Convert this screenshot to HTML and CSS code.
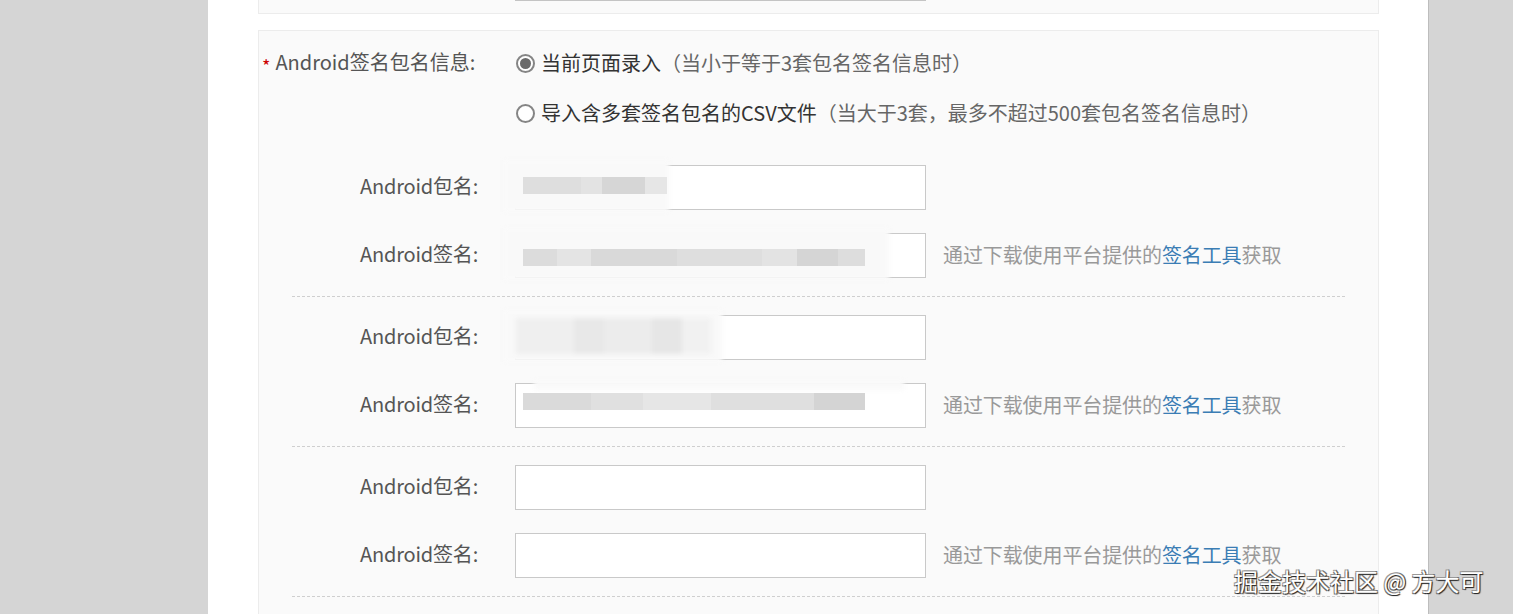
FILE: index.html
```html
<!DOCTYPE html>
<html lang="zh-CN">
<head>
<meta charset="utf-8">
<title>Android签名包名信息</title>
<link rel="stylesheet" href="styles.css">
</head>
<body>
<div class="page">
  <div class="panel-top"><div class="stub"></div></div>
  <div class="panel">
    <div class="field-row">
      <div class="field-label"><span class="req">*</span>Android签名包名信息:</div>
      <div class="options">
        <label class="radio-row"><span class="radio checked"></span><span class="opt-main">当前页面录入</span><span class="opt-note">（当小于等于3套包名签名信息时）</span></label>
        <label class="radio-row"><span class="radio"></span><span class="opt-main">导入含多套签名包名的CSV文件</span><span class="opt-note">（当大于3套，最多不超过500套包名签名信息时）</span></label>
      </div>
    </div>

    <div class="group">
      <div class="pair-row">
        <div class="pair-label">Android包名:</div>
        <div class="input-box">
          <div class="mask mask-a"></div>
          <div class="blur-bar bar-a"></div>
        </div>
      </div>
      <div class="pair-row">
        <div class="pair-label">Android签名:</div>
        <div class="input-box">
          <div class="mask mask-b"></div>
          <div class="blur-bar bar-b"></div>
        </div>
        <div class="hint">通过下载使用平台提供的<a class="link">签名工具</a>获取</div>
      </div>
    </div>

    <div class="group">
      <div class="pair-row">
        <div class="pair-label">Android包名:</div>
        <div class="input-box">
          <div class="mask mask-c"></div>
          <div class="blur-bar bar-c"></div>
        </div>
      </div>
      <div class="pair-row">
        <div class="pair-label">Android签名:</div>
        <div class="input-box">
          <div class="mask mask-d"></div>
          <div class="blur-bar bar-d"></div>
        </div>
        <div class="hint">通过下载使用平台提供的<a class="link">签名工具</a>获取</div>
      </div>
    </div>

    <div class="group">
      <div class="pair-row">
        <div class="pair-label">Android包名:</div>
        <div class="input-box"></div>
      </div>
      <div class="pair-row">
        <div class="pair-label">Android签名:</div>
        <div class="input-box"></div>
        <div class="hint">通过下载使用平台提供的<a class="link">签名工具</a>获取</div>
      </div>
    </div>
  </div>
</div>
<div class="watermark">掘金技术社区 @ 方大可</div>
</body>
</html>
```
FILE: styles.css
```css
html, body {
  margin: 0;
  padding: 0;
}
body {
  width: 1513px;
  height: 614px;
  overflow: hidden;
  background: #d5d5d5;
  font-family: "Noto Sans CJK SC", "Noto Sans", sans-serif;
  font-size: 20px;
  color: #555;
  position: relative;
}
.page {
  margin-left: 208px;
  width: 1221px;
  height: 614px;
  overflow: hidden;
  background: #fff;
  box-sizing: border-box;
  padding: 0 49px 0 50px;
  border-right: 1px solid #bdbdbd;
}
.panel-top {
  height: 13px;
  border: 1px solid #ececec;
  border-top: none;
  background: #fafafa;
}
.stub {
  margin-left: 256px;
  width: 411px;
  height: 1px;
  background: #c4c4c4;
}
.panel {
  margin-top: 16px;
  border: 1px solid #ececec;
  border-bottom: none;
  background: #fafafa;
  height: 584px;
  box-sizing: border-box;
  padding-top: 17px;
}
.field-row {
  display: flex;
}
.field-label {
  width: 257px;
  box-sizing: border-box;
  padding-left: 3px;
  height: 30px;
  line-height: 28px;
  color: #555;
  white-space: nowrap;
}
.req {
  color: #c00;
  font-size: 18px;
  margin-right: 5px;
  position: relative;
  top: 3px;
}
.options {
  display: flex;
  flex-direction: column;
  gap: 20px;
}
.radio-row {
  display: flex;
  align-items: center;
  height: 30px;
  line-height: 28px;
  white-space: nowrap;
}
.radio {
  width: 15px;
  height: 15px;
  border: 2px solid #858585;
  border-radius: 50%;
  background: #fff;
  margin-right: 6px;
  position: relative;
  flex: none;
}
.radio.checked::after {
  content: "";
  position: absolute;
  left: 2px;
  top: 2px;
  width: 11px;
  height: 11px;
  border-radius: 50%;
  background: #6a6a6a;
}
.opt-main {
  color: #333;
}
.opt-note {
  color: #666;
}
.group {
  margin: 19px 33px 0;
  padding: 18px 0 18px;
  border-bottom: 1px dashed #cfcfcf;
  display: flex;
  flex-direction: column;
  gap: 23px;
}
.group + .group {
  margin-top: 0;
}
.pair-row {
  display: flex;
  align-items: center;
  height: 45px;
}
.pair-label {
  width: 186px;
  text-align: right;
  margin-right: 37px;
  padding-bottom: 4px;
  color: #555;
  white-space: nowrap;
  letter-spacing: -0.2px;
}
.input-box {
  width: 411px;
  height: 45px;
  box-sizing: border-box;
  border: 1px solid #c9c9c9;
  background: #fff;
  position: relative;
  flex: none;
}
.hint {
  margin-left: 17px;
  padding-bottom: 2px;
  color: #999;
  white-space: nowrap;
  letter-spacing: -0.1px;
}
.link {
  color: #3b7db4;
  text-decoration: none;
}
.mask {
  position: absolute;
  background: #f9f9f9;
  filter: blur(2px);
}
.mask-a {
  left: -12px;
  top: -6px;
  width: 165px;
  height: 52px;
}
.mask-b {
  left: -12px;
  top: -6px;
  width: 385px;
  height: 52px;
}
.mask-c {
  left: -12px;
  top: -6px;
  width: 218px;
  height: 52px;
}
.mask-d {
  left: 18px;
  top: -4px;
  width: 370px;
  height: 10px;
}
.blur-bar {
  position: absolute;
  height: 17px;
  filter: blur(0.6px);
}
.bar-a {
  left: 7px;
  top: 11px;
  width: 144px;
  background: linear-gradient(90deg, #dedede 0 40%, #e3e3e3 40% 55%, #d6d6d6 55% 85%, #e6e6e6 85%);
}
.bar-b {
  left: 7px;
  top: 15px;
  width: 342px;
  background: linear-gradient(90deg, #dcdcdc 0 10%, #e4e4e4 10% 20%, #d9d9d9 20% 45%, #dedede 45% 70%, #e3e3e3 70% 80%, #d5d5d5 80% 92%, #dddddd 92%);
}
.bar-c {
  left: 0;
  top: 2px;
  width: 195px;
  height: 36px;
  filter: blur(2px);
  background: linear-gradient(90deg, #efefef 0 30%, #e8e8e8 30% 45%, #ececec 45% 70%, #e6e6e6 70% 85%, #f1f1f1 85%);
}
.bar-d {
  left: 7px;
  top: 9px;
  width: 342px;
  background: linear-gradient(90deg, #dadada 0 20%, #e0e0e0 20% 35%, #e6e6e6 35% 55%, #dfdfdf 55% 85%, #d4d4d4 85%);
}
.watermark {
  position: absolute;
  left: 1234px;
  top: 566px;
  font-size: 24px;
  line-height: 30px;
  color: #fff;
  white-space: nowrap;
  text-shadow: 1px 1px 1px #222, -1px -1px 0 #999, 1px -1px 0 #777, -1px 1px 0 #777;
}
```
